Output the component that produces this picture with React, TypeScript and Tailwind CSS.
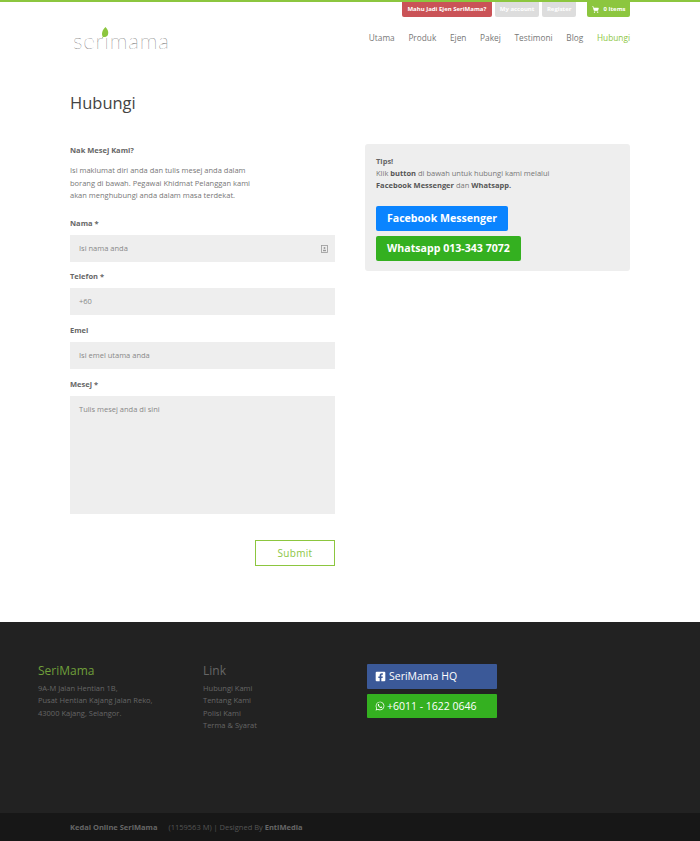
import { ShoppingCart } from "lucide-react";
import { FaWhatsapp, FaFacebookSquare } from "react-icons/fa";

const navItems = ["Utama", "Produk", "Ejen", "Pakej", "Testimoni", "Blog"];

function Field({ label, required, placeholder, icon }: { label: string; required?: boolean; placeholder: string; icon?: boolean }) {
  return (
    <div className="mb-[4.5px]">
      <div className="h-[20px] text-[7.5px] leading-[20px] font-bold text-[#666]">
        {label}
        {required && <span> *</span>}
      </div>
      <div className="mt-[2px] flex h-[27px] items-center justify-between bg-[#eeeeee] pl-[9px] pr-[7px] pt-[1px] text-[7.5px] text-[#888]">
        <span>{placeholder}</span>
        {icon && (
          <svg width="7" height="8" viewBox="0 0 7 8" fill="none">
            <rect x="0.5" y="0.5" width="6" height="7" stroke="#999" strokeWidth="0.8" />
            <circle cx="3.5" cy="3" r="1" fill="#999" />
            <rect x="2" y="4.8" width="3" height="1.4" fill="#999" />
          </svg>
        )}
      </div>
    </div>
  );
}

export default function App() {
  return (
    <div className="flex min-h-[841px] flex-col bg-white font-['Open_Sans',sans-serif] text-[#777]">
      <div className="h-[2px] bg-[#8cc63f]" />

      <header className="h-[58px] pl-[73px] pr-[70px]">
        <div className="flex h-[16px] items-start justify-end text-[6px] font-bold text-white">
          <div className="flex h-[15px] items-center rounded-b-[2px] bg-[#ca5357] px-[5.5px]">Mahu Jadi Ejen SeriMama?</div>
          <div className="ml-[3px] flex h-[15px] items-center rounded-b-[2px] bg-[#dddddd] px-[5px]">My account</div>
          <div className="ml-[3px] flex h-[15px] items-center rounded-b-[2px] bg-[#dddddd] px-[4.5px]">Register</div>
          <div className="ml-[11px] flex h-[15px] items-center gap-[5px] rounded-b-[2px] bg-[#8cc63f] px-[4.5px]">
            <ShoppingCart size={7} fill="white" strokeWidth={2} />
            0 Items
          </div>
        </div>
        <div className="mt-[5px] flex items-start justify-between">
          <div className="relative mt-[5px] h-[24px] w-[96px]">
            <span className="absolute left-0 top-[1px] font-['Lato',sans-serif] text-[22.5px] leading-[24px] font-thin tracking-[0.8px] text-[#333]">
              serimama
            </span>
            <svg className="absolute left-[28px] top-[-1px]" width="8" height="11" viewBox="0 0 8 11">
              <path d="M4.5 0 C7 2.5 8 5.5 6.8 8 C6 9.6 4 10.4 2.4 10 L1.6 11 L1 10.6 L1.8 9.5 C0.2 7.5 1 3 4.5 0 Z" fill="#8cc63f" />
            </svg>
          </div>
          <nav className="flex gap-[13.7px] pt-[9px] text-[8.3px] leading-[11px] text-[#777]">
            {navItems.map((n) => (
              <span key={n}>{n}</span>
            ))}
            <span className="font-medium text-[#8cc63f]">Hubungi</span>
          </nav>
        </div>
      </header>

      <main className="flex-1 px-[70px]">
        <h1 className="mt-[31px] text-[16.5px] leading-[24px] font-normal text-[#444]">Hubungi</h1>

        <div className="mt-[29px] grid grid-cols-[265px_265px] gap-[30px]">
          <div>
            <p className="text-[7.5px] leading-[12px] font-bold text-[#666]">Nak Mesej Kami?</p>
            <p className="mt-[8px] text-[7.5px] leading-[12.5px] text-[#777]">
              Isi maklumat diri anda dan tulis mesej anda dalam
              <br />
              borang di bawah. Pegawai Khidmat Pelanggan kami
              <br />
              akan menghubungi anda dalam masa terdekat.
            </p>
            <div className="mt-[11px]">
              <Field label="Nama" required placeholder="Isi nama anda" icon />
              <Field label="Telefon" required placeholder="+60" />
              <Field label="Emel" placeholder="Isi emel utama anda" />
              <div className="mt-[5.5px] h-[20px] text-[7.5px] leading-[20px] font-bold text-[#666]">Mesej *</div>
              <div className="mt-[2px] h-[118px] bg-[#eeeeee] px-[9px] py-[7px] text-[7.5px] leading-[12px] text-[#888]">
                Tulis mesej anda di sini
              </div>
            </div>
            <div className="mt-[26px] flex justify-end">
              <div className="flex h-[26px] w-[80px] items-center justify-center border border-[#8cc63f] text-[10px] tracking-[0.3px] text-[#8cc63f]">
                Submit
              </div>
            </div>
          </div>

          <div>
            <div className="rounded-[3px] bg-[#eeeeee] px-[11px] pt-[11px] pb-[10px] text-[7.5px] leading-[12px] text-[#777]">
              <div className="font-bold text-[#666]">Tips!</div>
              <div>
                Klik <b className="text-[#555]">button</b> di bawah untuk hubungi kami melalui
              </div>
              <div>
                <b className="text-[#555]">Facebook Messenger</b> dan <b className="text-[#555]">Whatsapp.</b>
              </div>
              <div className="mt-[15px] flex h-[25px] w-[132px] items-center justify-center rounded-[2px] bg-[#0a84ff] pb-[1px] text-[10.6px] font-bold text-white">
                Facebook Messenger
              </div>
              <div className="mt-[5px] flex h-[25px] w-[145px] items-center justify-center rounded-[2px] bg-[#34b020] pb-[1px] text-[10.6px] font-bold text-white">
                Whatsapp 013-343 7072
              </div>
            </div>
          </div>
        </div>
      </main>

      <footer className="mt-[55px]">
        <div className="flex h-[191px] bg-[#222222] pl-[38px] pt-[41px] text-[7.5px] leading-[12.4px] text-[#666]">
          <div className="w-[165px]">
            <div className="text-[12px] leading-[16px] text-[#6f9f3a]">SeriMama</div>
            <div className="mt-[3px]">
              9A-M Jalan Hentian 1B,
              <br />
              Pusat Hentian Kajang Jalan Reko,
              <br />
              43000 Kajang, Selangor.
            </div>
          </div>
          <div className="w-[164px]">
            <div className="text-[12px] leading-[16px] text-[#666]">Link</div>
            <div className="mt-[3px]">
              <div>Hubungi Kami</div>
              <div>Tentang Kami</div>
              <div>Polisi Kami</div>
              <div>Terma &amp; Syarat</div>
            </div>
          </div>
          <div className="w-[130px] pt-[1px]">
            <div className="flex h-[25px] items-center gap-[3px] rounded-[1px] bg-[#3b5998] pl-[8px] text-[10.5px] text-white">
              <FaFacebookSquare size={11} />
              SeriMama HQ
            </div>
            <div className="mt-[5px] flex h-[24px] items-center gap-[2px] rounded-[1px] bg-[#34b020] pl-[8px] text-[10.5px] text-white">
              <FaWhatsapp size={10} />
              +6011 - 1622 0646
            </div>
          </div>
        </div>
        <div className="flex h-[28px] items-center bg-[#171717] pl-[70px] pt-[1px] text-[7.5px] text-[#555]">
          <b className="text-[#666]">Kedai Online SeriMama</b>
          <span className="ml-[11px]">(1159563 M) | Designed By&nbsp;</span>
          <b className="text-[#666]">EntiMedia</b>
        </div>
      </footer>
    </div>
  );
}
